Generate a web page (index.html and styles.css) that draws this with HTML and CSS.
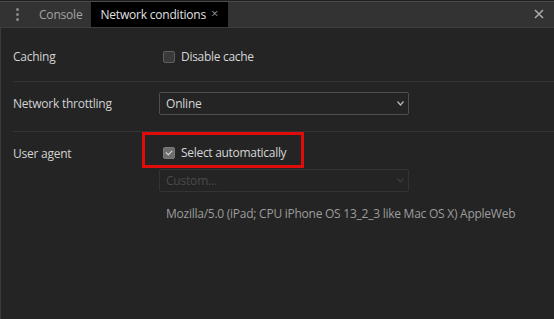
FILE: index.html
```html
<!DOCTYPE html>
<html lang="en">
<head>
  <meta charset="UTF-8" />
  <title>Network conditions</title>
  <link rel="stylesheet" href="styles.css">
</head>
<body>
  <!-- Drawer tab strip -->
  <div class="tabbar">
    <div class="kebab">
      <span></span><span></span><span></span>
    </div>
    <div class="tab">Console</div>
    <div class="tab active">Network conditions <span class="tab-close">&#215;</span></div>
    <div class="spacer"></div>
    <svg class="drawer-close" width="10" height="10" viewBox="0 0 10 10">
      <path d="M1 1 L9 9 M9 1 L1 9" stroke="#a8a8a8" stroke-width="1.6" />
    </svg>
  </div>

  <div class="panel">
    <div class="row caching">
      <div class="label">Caching</div>
      <div class="field">
        <label class="check"><input type="checkbox" /> Disable cache</label>
      </div>
    </div>

    <div class="row throttling">
      <div class="label">Network throttling</div>
      <div class="field">
        <div class="select">
          <span>Online</span>
          <svg class="arrow" width="7" height="5" viewBox="0 0 7 5"><path d="M0.5 0.5 L3.5 4 L6.5 0.5" fill="none" stroke="#bbb" stroke-width="1.2" /></svg>
        </div>
      </div>
    </div>

    <div class="row agent">
      <div class="label">User agent</div>
      <div class="field">
        <div class="highlight-wrap">
          <label class="check"><input type="checkbox" checked /> Select automatically</label>
          <div class="highlight"></div>
        </div>
        <div class="select disabled">
          <span>Custom...</span>
          <svg class="arrow" width="7" height="5" viewBox="0 0 7 5"><path d="M0.5 0.5 L3.5 4 L6.5 0.5" fill="none" stroke="#3c3c3c" stroke-width="1.2" /></svg>
        </div>
        <div class="ua">Mozilla/5.0 (iPad; CPU iPhone OS 13_2_3 like Mac OS X) AppleWeb</div>
      </div>
    </div>
  </div>
</body>
</html>
```

FILE: styles.css
```css
body {
  margin: 0;
  width: 554px;
  height: 319px;
  overflow: hidden;
  background: #242424;
  font-family: "Open Sans", "Noto Sans", sans-serif;
  font-size: 12px;
  color: #d6d6d6;
}
.tabbar {
  display: flex;
  align-items: stretch;
  height: 26px;
  background: #333;
  border-top: 1px solid #1e1e1e;
  box-shadow: inset 0 1px 0 #4a4a4a;
  border-bottom: 1px solid #3c3c3c;
}
.kebab {
  width: 35px;
  display: flex;
  flex-direction: column;
  align-items: center;
  justify-content: center;
  gap: 2px;
}
.kebab span {
  width: 3px;
  height: 3px;
  border-radius: 50%;
  background: #8a8a8a;
}
.tab {
  display: flex;
  align-items: center;
  padding: 0 9px 0 4px;
  color: #a3a3a3;
  letter-spacing: -0.2px;
}
.tab.active {
  background: #000;
  color: #e0e0e0;
  margin-top: 1px;
  padding: 0 10px 0 9px;
}
.tab-close {
  color: #8d8d8d;
  font-size: 13px;
  margin-left: 5px;
  margin-top: -3px;
}
.spacer { flex: 1; }
.drawer-close {
  align-self: center;
  margin-right: 10px;
}
.panel {
  border-left: 1px solid #3a3a3a;
  height: 291px;
  padding: 0 0 0 12px;
}
.row {
  display: flex;
  align-items: flex-start;
  border-bottom: 1px solid #333;
}
.row.caching { padding: 20px 0 16px; }
.row.throttling { padding: 10px 0 16px; align-items: center; }
.row.agent { padding: 0; border-bottom: none; }
.label {
  width: 146px;
  line-height: 17px;
  color: #d2d2d2;
  letter-spacing: -0.25px;
}
.row.agent .label { padding-top: 13px; }
.field {
  display: flex;
  flex-direction: column;
}
.check {
  display: flex;
  align-items: center;
  gap: 6px;
  height: 17px;
  padding-left: 4px;
  color: #d6d6d6;
  letter-spacing: -0.3px;
}
.check input {
  appearance: none;
  margin: 0;
  width: 12px;
  height: 12px;
  border: 1px solid #5e5e5e;
  border-radius: 2px;
  background: #3a3a3a;
  display: flex;
  align-items: center;
  justify-content: center;
}
.check input:checked {
  background: #6d6d6d;
  border-color: #7a7a7a;
}
.check input:checked::after {
  content: "";
  width: 5px;
  height: 3px;
  border-left: 1.6px solid #dcdcdc;
  border-bottom: 1.6px solid #dcdcdc;
  transform: rotate(-45deg);
  margin-top: -2px;
}
.select {
  position: relative;
  box-sizing: border-box;
  width: 250px;
  height: 23px;
  border: 1px solid #4f4f4f;
  border-radius: 2px;
  padding: 0 6px;
  display: flex;
  align-items: center;
  color: #d6d6d6;
  letter-spacing: -0.2px;
}
.select .arrow {
  position: absolute;
  right: 4px;
  top: 8px;
}
.select.disabled {
  border-color: #333;
  color: #4a4a4a;
}
.highlight-wrap {
  position: relative;
  padding: 12px 0 8px;
}
.highlight {
  position: absolute;
  box-sizing: border-box;
  left: -17px;
  top: 0;
  width: 162px;
  height: 36px;
  border: 3px solid #e00b0b;
}
.ua {
  margin-top: 13px;
  padding-left: 7px;
  line-height: 17px;
  color: #9c9c9c;
  letter-spacing: -0.25px;
}
```
